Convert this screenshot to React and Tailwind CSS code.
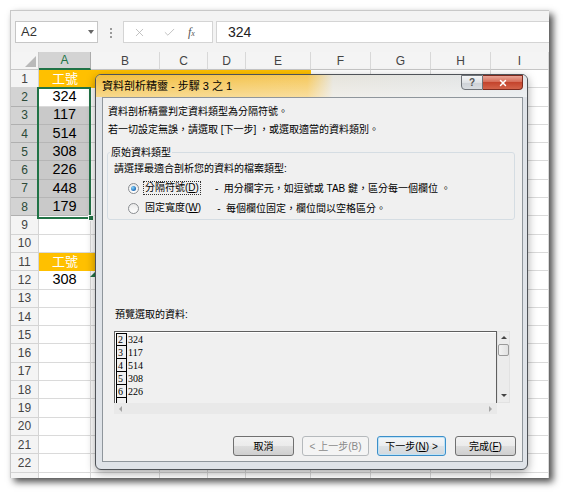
import React from 'react';
import { X, Check } from 'lucide-react';

const cols = [
  { k: 'A', w: 'w-[52px]' },
  { k: 'B', w: 'w-[69px]' },
  { k: 'C', w: 'w-[48px]' },
  { k: 'D', w: 'w-[38px]' },
  { k: 'E', w: 'w-[65px]' },
  { k: 'F', w: 'w-[60px]' },
  { k: 'G', w: 'w-[60px]' },
  { k: 'H', w: 'w-[60px]' },
  { k: 'I', w: 'w-[58px]' },
];

const values = { 2: '324', 3: '117', 4: '514', 5: '308', 6: '226', 7: '448', 8: '179', 12: '308' };
const rows = Array.from({ length: 23 }, (_, i) => i + 1);
const preview = [['2', '324'], ['3', '117'], ['4', '514'], ['5', '308'], ['6', '226'], ['', '']];

const cjk = "font-['Liberation_Sans','Noto_Sans_CJK_TC',sans-serif]";

function cellClass(r, c) {
  if ((r === 1 || r === 11) && c <= 4) return 'bg-[#ffc000] text-white';
  if (c === 0 && r >= 3 && r <= 8) return 'bg-[#c9c9c9] border-r border-b border-[#b6b6b6] text-black';
  return 'bg-white border-r border-b border-[#dadada] text-black';
}

function Radio({ checked }) {
  return (
    <span className="w-[11px] h-[11px] shrink-0 rounded-full border border-[#8a8d91] bg-[linear-gradient(180deg,#e9e9e9_0%,#ffffff_100%)] flex items-center justify-center">
      {checked && <span className="w-[5px] h-[5px] rounded-full bg-[radial-gradient(circle_at_35%_35%,#8ad6f8_0%,#2a79c4_60%,#174a86_100%)]" />}
    </span>
  );
}

function Btn({ children, kind }) {
  const base = 'h-[20px] rounded-[3px] border flex items-center justify-center text-[10px]';
  if (kind === 'disabled') return <div className={`${base} w-[67px] border-[#b5b9bc] bg-[#f4f4f4] text-[#8a8a8a]`}>{children}</div>;
  if (kind === 'default') return <div className={`${base} w-[69px] border-[#3c8fc9] bg-[linear-gradient(180deg,#f4f6f8_0%,#eaedf0_50%,#dde2e6_51%,#d2d8dd_100%)] shadow-[inset_0_0_0_1px_#bfe3f7] text-black`}>{children}</div>;
  return <div className={`${base} w-[61px] border-[#707070] bg-[linear-gradient(180deg,#f2f2f2_0%,#ebebeb_50%,#dddddd_51%,#cfcfcf_100%)] text-black`}>{children}</div>;
}

export default function App() {
  return (
    <div className="w-[567px] h-[496px] bg-white pt-[10px] pl-[10px] overflow-hidden font-['Liberation_Sans',sans-serif]">
      <div className="relative w-[539px] h-[468px] bg-[#f3f3f3] border-t border-l border-[#c8c8c8] shadow-[4px_4px_7px_rgba(0,0,0,0.7)] overflow-hidden">
        {/* formula bar */}
        <div className="h-[41px] flex items-start pt-[10px] pl-[4px]">
          <div className="w-[83px] h-[22px] bg-white border border-[#c6c6c6] flex items-center justify-between pl-[5px] pr-[3px]">
            <span className="text-[13px] text-[#333]">A2</span>
            <span className="w-0 h-0 border-x-[3px] border-x-transparent border-t-[4px] border-t-[#666]" />
          </div>
          <div className="ml-[12px] mt-[7px] flex flex-col gap-[2px]">
            <span className="w-[2px] h-[2px] bg-[#9a9a9a]" />
            <span className="w-[2px] h-[2px] bg-[#9a9a9a]" />
            <span className="w-[2px] h-[2px] bg-[#9a9a9a]" />
          </div>
          <div className="ml-[11px] w-[90px] h-[22px] bg-white border border-[#d4d4d4] flex items-center">
            <X size={13} strokeWidth={1.4} className="ml-[9px] text-[#b0b0b0]" />
            <Check size={13} strokeWidth={1.4} className="ml-[17px] text-[#b0b0b0]" />
            <span className="ml-[12px] text-[12px] italic text-[#555] font-['Liberation_Serif',serif]">f<span className="text-[8px]">x</span></span>
          </div>
          <div className="ml-[3px] flex-1 h-[22px] bg-white border-y border-l border-[#d4d4d4] flex items-center pl-[11px] text-[14px] text-[#222]">324</div>
        </div>

        {/* column headers */}
        <div className="flex h-[18px]">
          <div className="relative w-[28px] shrink-0 bg-[#f4f4f4] border-r border-b border-[#c6c6c6]">
            <span className="absolute right-[2px] bottom-[2px] w-0 h-0 border-l-[11px] border-l-transparent border-b-[11px] border-b-[#b9b9b9]" />
          </div>
          {cols.map((col, c) => (
            <div
              key={col.k}
              className={`${col.w} shrink-0 flex items-center justify-center text-[12px] ${c === 0 ? 'bg-[#d3d3d3] text-[#217346] border-r border-[#ababab] border-b-2 border-b-[#217346]' : 'bg-[#f4f4f4] text-[#444] border-r border-[#d8d8d8] border-b border-b-[#c6c6c6]'}`}
            >
              {col.k}
            </div>
          ))}
        </div>

        {/* grid rows */}
        {rows.map((r) => {
          const sel = r >= 2 && r <= 8;
          return (
            <div key={r} className="flex h-[18.3px]">
              <div className={`w-[28px] shrink-0 flex items-center justify-center text-[12px] border-r border-b ${sel ? 'bg-[#d3d3d3] text-[#2b4a38] border-[#b0b0b0]' : 'bg-[#f4f4f4] text-[#444] border-[#d4d4d4]'}`}>{r < 23 ? r : ''}</div>
              {cols.map((col, c) => (
                <div key={col.k} className={`${col.w} shrink-0 flex items-center justify-center ${cellClass(r, c)}`}>
                  {c === 0 && (r === 1 || r === 11) && <span className={`${cjk} text-[13px]`}>工號</span>}
                  {c === 0 && values[r] && <span className="text-[14.5px]">{values[r]}</span>}
                </div>
              ))}
            </div>
          );
        })}

        {/* selection A2:A8 */}
        <div className="absolute left-[26px] top-[76px] w-[54px] h-[132px] border-2 border-[#217346]" />
        <div className="absolute left-[77px] top-[204px] w-[6px] h-[6px] bg-[#217346] border border-white" />
        <div className="absolute left-[79px] top-[261px] w-0 h-0 border-l-[5px] border-l-transparent border-b-[5px] border-b-[#217346]" />

        {/* dialog */}
        <div className="absolute left-[84px] top-[63px] w-[433px] h-[396px] rounded-[6px] border border-[#4f5358] bg-[#dfe3e8] shadow-[0_3px_10px_rgba(0,0,0,0.35)] flex flex-col overflow-hidden">
          <div className="relative h-[22px] shrink-0 flex items-center pl-[6px] bg-[linear-gradient(180deg,rgba(255,255,255,0)_0%,rgba(255,255,255,0.4)_100%),linear-gradient(90deg,#f2be3e_0%,#f5c85c_49%,#e6e4dc_55%,#e1e5e9_100%)]">
            <span className={`${cjk} text-[11px] text-black`}>資料剖析精靈 - 步驟 3 之 1</span>
            <div className="absolute right-[4px] top-0 flex">
              <div className="w-[22px] h-[15px] border border-[#6f7378] rounded-bl-[4px] bg-[linear-gradient(180deg,#f4f5f6_0%,#dfe2e5_50%,#cdd1d6_51%,#d9dde1_100%)] flex items-center justify-center text-[10px] font-bold text-[#555]">?</div>
              <div className="w-[40px] h-[15px] border border-l-0 border-[#7d2a1e] rounded-br-[4px] bg-[linear-gradient(180deg,#e9a597_0%,#d66d58_45%,#c4442d_50%,#d3634a_100%)] flex items-center justify-center">
                <X size={10} strokeWidth={3.5} className="text-white" />
              </div>
            </div>
          </div>

          <div className={`${cjk} flex-1 ml-[6px] mr-[4px] mb-[7px] border border-[#8f969c] bg-[#f0f0f0] flex flex-col text-[10px] text-black`}>
            <p className="mt-[5px] ml-[5px] leading-[18px]">資料剖析精靈判定資料類型為分隔符號。</p>
            <p className="ml-[5px] leading-[18px]">若一切設定無誤，請選取 [下一步] ，或選取適當的資料類別。</p>

            <div className="relative mt-[13px] ml-[4px] w-[408px] h-[68px] border border-[#d5dde3] rounded-[3px] pt-[7px] pl-[6px]">
              <span className="absolute left-[2px] -top-[7px] bg-[#f0f0f0] px-[1px] leading-[14px]">原始資料類型</span>
              <p className="leading-[18px]">請選擇最適合剖析您的資料的檔案類型:</p>
              <div className="flex items-center h-[20px]">
                <span className="ml-[14px]"><Radio checked /></span>
                <span className="ml-[4px] px-[1px] border border-dotted border-[#333] leading-[12px]">分隔符號(<u>D</u>)</span>
                <span className="ml-[14px]">-&nbsp; 用分欄字元，如逗號或 TAB 鍵，區分每一個欄位 。</span>
              </div>
              <div className="flex items-center h-[20px]">
                <span className="ml-[14px]"><Radio /></span>
                <span className="ml-[4px] px-[1px] border border-transparent leading-[12px]">固定寬度(<u>W</u>)</span>
                <span className="ml-[14px]">-&nbsp; 每個欄位固定，欄位間以空格區分。</span>
              </div>
            </div>

            <p className="mt-[86px] ml-[12px] leading-[18px]">預覽選取的資料:</p>

            <div className="mt-[7px] ml-[11px] flex">
              <div className="w-[383px] h-[83px] flex flex-col">
                <div className="h-[72px] border-t border-l border-r border-[#5f5f5f] shadow-[inset_1px_1px_0_#ffffff] bg-[#f0f0f0] overflow-hidden pt-[1px] pl-[1px]">
                  {preview.map(([n, v], i) => (
                    <div key={i} className="flex h-[13px] font-['Liberation_Serif',serif] text-[10px] leading-none">
                      <span className={`w-[11px] shrink-0 border-l border-r border-b border-black flex items-end pl-[1px] ${i === 0 ? 'border-t' : ''}`}>{n}</span>
                      <span className="pl-[1px] flex items-center">{v}</span>
                    </div>
                  ))}
                </div>
                <div className="h-[11px] bg-[#e9e9e9] flex items-center justify-between px-[5px]">
                  <span className="w-0 h-0 border-y-[3px] border-y-transparent border-r-[3px] border-r-[#a5a5a5]" />
                  <span className="w-0 h-0 border-y-[3px] border-y-transparent border-l-[3px] border-l-[#a5a5a5]" />
                </div>
              </div>
              <div className="w-[13px] h-[72px] bg-[#ececec] border border-[#e2e2e2] flex flex-col items-center pt-[4px]">
                <span className="w-0 h-0 border-x-[3px] border-x-transparent border-b-[3px] border-b-[#444]" />
                <span className="mt-[5px] w-[11px] h-[12px] rounded-[2px] border border-[#9a9a9a] bg-[linear-gradient(90deg,#f3f3f3_0%,#e2e2e2_100%)]" />
                <span className="mt-auto mb-[5px] w-0 h-0 border-x-[3px] border-x-transparent border-t-[3px] border-t-[#444]" />
              </div>
            </div>

            <div className="mt-[22px] mr-[6px] flex justify-end gap-[8px]">
              <Btn>取消</Btn>
              <Btn kind="disabled">&lt; 上一步(B)</Btn>
              <Btn kind="default">下一步(<u>N</u>) &gt;</Btn>
              <div className="ml-[1px]"><Btn>完成(<u>F</u>)</Btn></div>
            </div>
          </div>
        </div>
      </div>
    </div>
  );
}
